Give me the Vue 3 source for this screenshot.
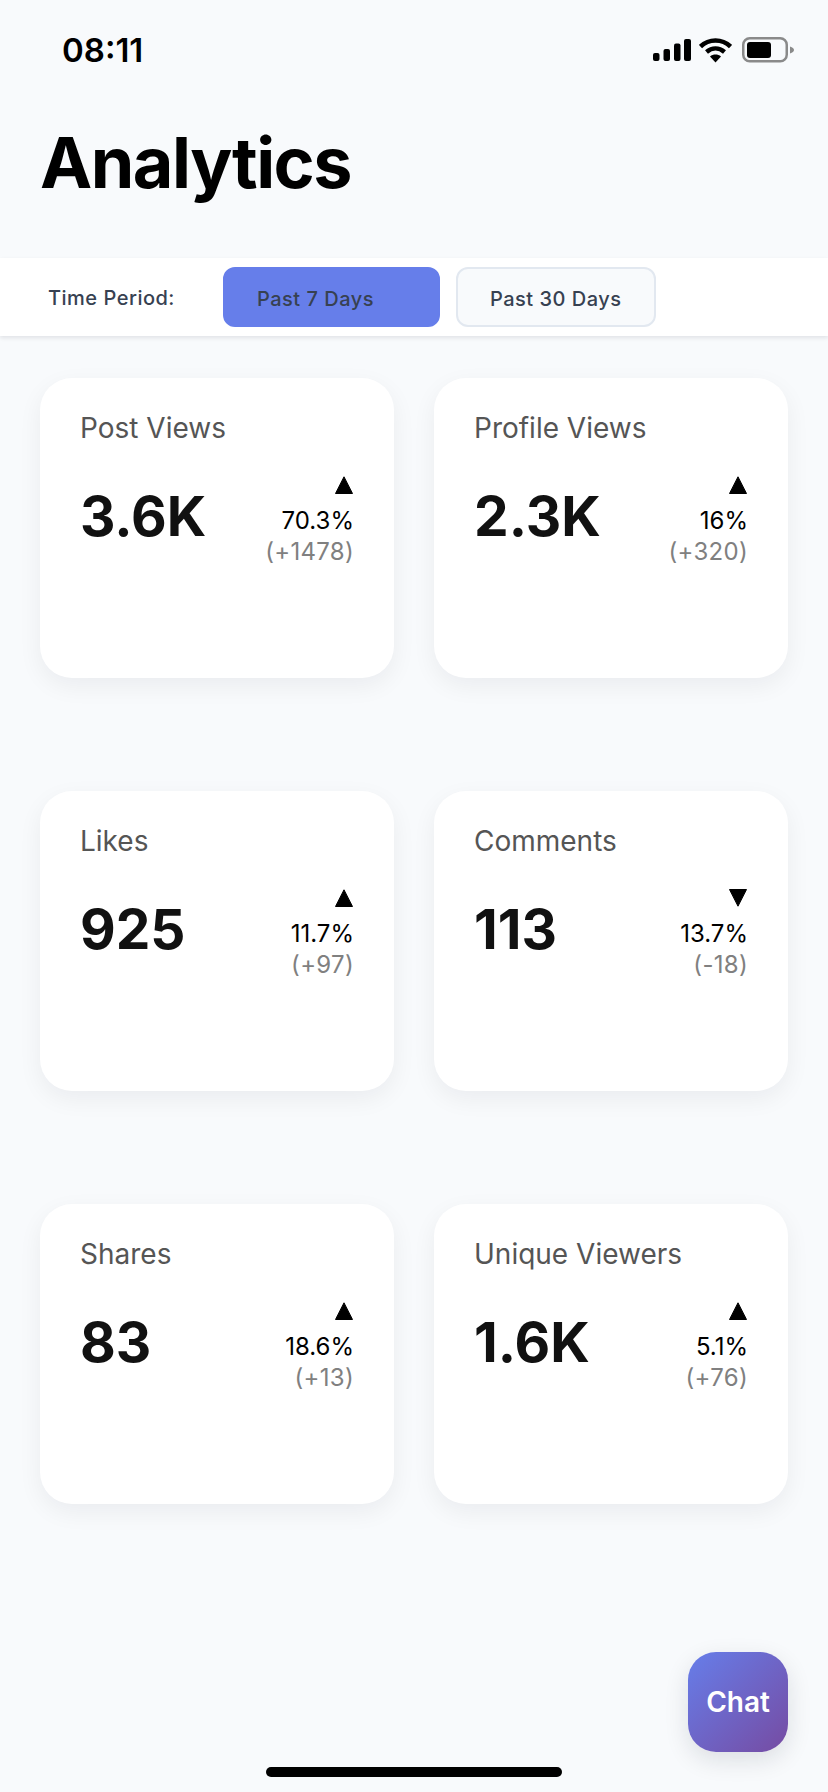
<template>
  <div class="page">
    <div class="status">
      <span class="time">08:11</span>
      <div class="status-icons">
        <svg class="signal" width="38" height="24" viewBox="0 0 38 24">
          <rect x="0" y="15" width="6.500" height="8" rx="2" />
          <rect x="10.500" y="11" width="6.500" height="12" rx="2" />
          <rect x="21" y="5.500" width="6.500" height="17.500" rx="2" />
          <rect x="31" y="1" width="7" height="22" rx="2" />
        </svg>
        <svg class="wifi" width="33" height="25" viewBox="0 0 33 25">
          <path d="M1.500 8.500C10 0.500 23 0.500 31.500 8.500" class="wave" />
          <path d="M7.500 14C13 9.300 20 9.300 25.500 14" class="wave" />
          <path d="M16.500 24.500L11 18.500C14.200 15.900 18.800 15.900 22 18.500Z" />
        </svg>
        <svg width="52" height="26" viewBox="0 0 52 26">
          <rect x="1.250" y="1.250" width="43.500" height="23" rx="6.500" class="shell" />
          <rect x="5" y="5" width="24" height="16" rx="3" />
          <path d="M48 9.500C50.500 10.300 52 11.500 52 13C52 14.500 50.500 15.700 48 16.500Z" fill="#8a8a8a" />
        </svg>
      </div>
    </div>

    <h1 class="title">Analytics</h1>

    <div class="period-bar">
      <span class="period-label">Time Period:</span>
      <button class="period active">Past 7 Days</button>
      <button class="period">Past 30 Days</button>
    </div>

    <div class="grid">
      <div class="card" v-for="item in stats" :key="item.name">
        <div class="card-name">{{ item.name }}</div>
        <div class="card-body">
          <div class="card-value">{{ item.value }}</div>
          <div class="change">
            <svg width="18" height="18" viewBox="0 0 18 18" :class="{ down: item.down }">
              <path d="M9 0.800L17.500 17.500H0.500Z" stroke="#000" stroke-width="1" stroke-linejoin="round" />
            </svg>
            <div class="percent">{{ item.percent }}</div>
            <div class="delta">{{ item.delta }}</div>
          </div>
        </div>
      </div>
    </div>

    <button class="chat">Chat</button>
    <div class="home-bar"></div>
  </div>
</template>

<script setup>
const stats = [
  { name: 'Post Views', value: '3.6K', percent: '70.3%', delta: '(+1478)' },
  { name: 'Profile Views', value: '2.3K', percent: '16%', delta: '(+320)' },
  { name: 'Likes', value: '925', percent: '11.7%', delta: '(+97)' },
  { name: 'Comments', value: '113', percent: '13.7%', delta: '(-18)', down: true },
  { name: 'Shares', value: '83', percent: '18.6%', delta: '(+13)' },
  { name: 'Unique Viewers', value: '1.6K', percent: '5.1%', delta: '(+76)' }
]
</script>

<style>
html, body {
  margin: 0;
  background: #f8fafc;
}
</style>

<style scoped>
.page {
  position: relative;
  height: 1792px;
  overflow: hidden;
  background: #f8fafc;
  font-family: Inter, "Liberation Sans", sans-serif;
}
.status {
  height: 100px;
  padding: 0 34px 0 62px;
  display: flex;
  align-items: center;
  justify-content: space-between;
  box-sizing: border-box;
}
.time {
  font-size: 33px;
  font-weight: 600;
  color: #000;
}
.status-icons {
  display: flex;
  align-items: center;
}
.signal {
  margin-right: 8px;
}
.wifi {
  margin-right: 10px;
}
.wave {
  fill: none;
  stroke: #000;
  stroke-width: 4.500;
}
.shell {
  fill: none;
  stroke: #8a8a8a;
  stroke-width: 2.500;
}
.title {
  margin: 25px 0 0 40px;
  height: 133px;
  font-size: 70px;
  line-height: 76px;
  font-weight: 700;
  color: #000;
  letter-spacing: -1.500px;
}
.period-bar {
  height: 78px;
  padding: 9px 0 9px 48px;
  box-sizing: border-box;
  display: flex;
  align-items: center;
  background: #fff;
  box-shadow: 0 2px 4px rgba(15, 23, 42, 0.1);
}
.period-label {
  width: 175px;
  padding-top: 2px;
  font-size: 20px;
  font-weight: 500;
  color: #374151;
  letter-spacing: 0.500px;
}
.period {
  height: 60px;
  margin-right: 16px;
  padding: 3px 32px 0;
  border: 2px solid #e2e8f0;
  border-radius: 12px;
  background: #f8fafc;
  font: 500 20px Inter, "Liberation Sans", sans-serif;
  letter-spacing: 0.500px;
  color: #374151;
}
.period.active {
  width: 217px;
  text-align: left;
  background: #667eea;
  border-color: #667eea;
}
.grid {
  display: grid;
  grid-template-columns: 354px 354px;
  column-gap: 40px;
  row-gap: 113px;
  padding: 42px 40px 0;
}
.card {
  height: 300px;
  padding: 33px 40px;
  box-sizing: border-box;
  background: #fff;
  border-radius: 32px;
  box-shadow: 0 8px 24px rgba(15, 23, 42, 0.06);
}
.card-name {
  font-size: 28px;
  line-height: 34px;
  color: #555;
}
.card-body {
  margin-top: 30px;
  display: flex;
  justify-content: space-between;
}
.card-value {
  margin-top: 7px;
  font-size: 55px;
  line-height: 68px;
  font-weight: 700;
  color: #111;
}
.change {
  display: flex;
  flex-direction: column;
  align-items: flex-end;
  font-size: 24px;
  line-height: 30px;
}
.change svg {
  margin: 1px 1px 12px 0;
}
.change svg.down {
  transform: rotate(180deg);
}
.percent {
  color: #000;
}
.delta {
  margin-top: 1px;
  color: #808080;
  letter-spacing: 0.300px;
}
.chat {
  position: absolute;
  left: 688px;
  top: 1652px;
  width: 100px;
  height: 100px;
  border: 0;
  border-radius: 28px;
  background: linear-gradient(135deg, #667eea, #764ba2);
  color: #fff;
  font: 600 28px Inter, "Liberation Sans", sans-serif;
  box-shadow: 0 8px 24px rgba(15, 23, 42, 0.12);
}
.home-bar {
  position: absolute;
  left: 266px;
  top: 1767px;
  width: 296px;
  height: 10px;
  border-radius: 5px;
  background: #000;
}
</style>
